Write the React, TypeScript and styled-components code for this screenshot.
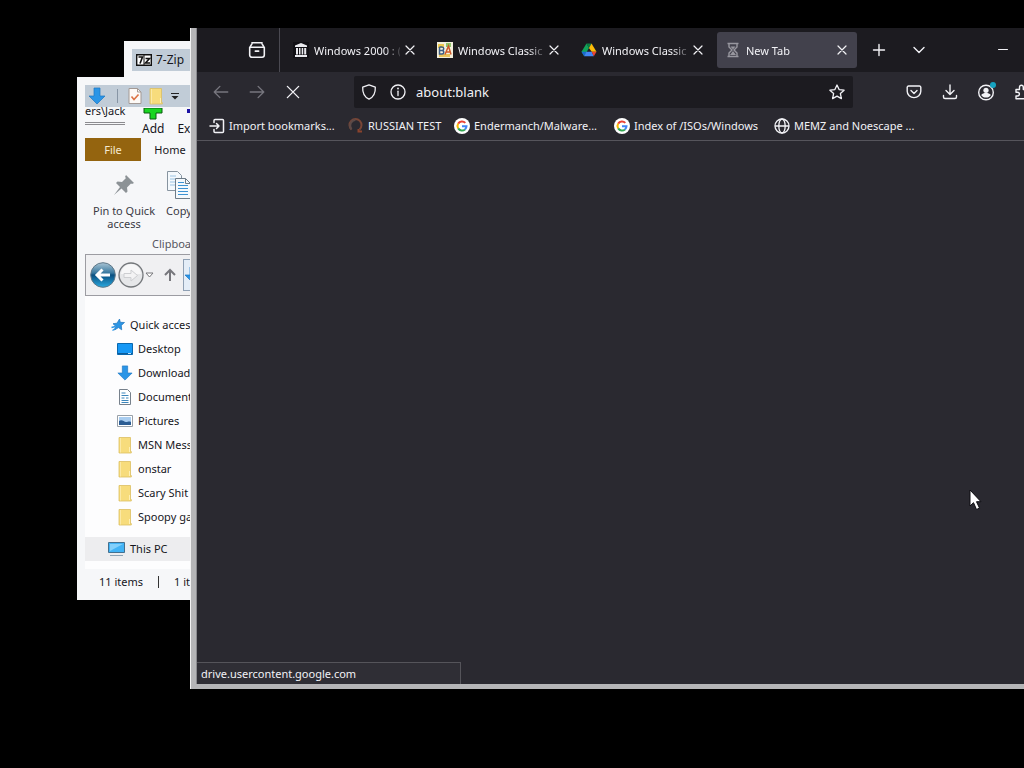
import React from "react";
import styled, { createGlobalStyle, css } from "styled-components";

const GlobalStyle = createGlobalStyle`
  *, *::before, *::after { box-sizing: border-box; }
  html, body, #root { height: 100%; }
  body { margin: 0; background: #000; overflow: hidden; }
  button, input { font: inherit; color: inherit; border: 0; padding: 0; background: none; }
  ul { list-style: none; margin: 0; padding: 0; }
`;

const Desktop = styled.main`
  position: relative;
  height: 100%;
  min-height: 700px;
  overflow: hidden;
  background: #000;
  font-family: "Noto Sans", "Open Sans", sans-serif;
  font-size: 11px;
  line-height: 16px;
  white-space: nowrap;
`;

/* ---------- light windows ---------- */

const LightWindow = styled.section<{ $x: number; $y: number }>`
  position: absolute;
  left: ${(p) => p.$x}px;
  top: ${(p) => p.$y}px;
  width: 260px;
  padding: 8px 8px 5px;
  overflow: hidden;
  background: #f6f7f9;
  color: #16161c;
`;

const TitleBar = styled.header`
  display: flex;
  align-items: center;
  height: 22px;
  gap: 4px;
  padding-left: 4px;
  background: #c1ccd7;
`;

const ZipTitle = styled.h2`
  margin: 0;
  font-size: 12px;
  font-weight: 400;
`;

const ZipBody = styled.div`
  height: 60px;
`;

const QuickBar = styled(TitleBar)`
  gap: 0;
  padding-left: 3px;
`;

const QuickButton = styled.button<{ $gap?: number }>`
  display: flex;
  margin-left: ${(p) => p.$gap ?? 0}px;
`;

const Divider = styled.i`
  width: 1px;
  height: 14px;
  margin-left: 11px;
  background: #8795a5;
`;

const Strip = styled.div`
  display: flex;
  height: 31px;
`;

const PathPiece = styled.div`
  width: 40px;
  height: 18px;
  line-height: 7px;
  border-bottom: 3px double #8c8c90;
`;

const ZipAction = styled.button<{ $gap: number }>`
  display: flex;
  flex-direction: column;
  align-items: center;
  justify-content: flex-end;
  margin-left: ${(p) => p.$gap}px;
  font-size: 12px;
  line-height: 18px;
`;

const RibbonTabs = styled.div`
  display: flex;
  height: 24px;
`;

const RibbonTab = styled.button<{ $file?: boolean }>`
  width: ${(p) => (p.$file ? 56 : 58)}px;
  height: 23px;
  ${(p) =>
    p.$file &&
    css`
      background: #94640f;
      color: #f6ead2;
    `}
`;

const Ribbon = styled.div`
  height: 92px;
  padding: 8px 0 0 7px;
  color: #3a3a44;
`;

const RibbonTools = styled.div`
  display: flex;
  gap: 10px;
  height: 66px;
`;

const RibbonTool = styled.button<{ $w: number }>`
  display: flex;
  flex-direction: column;
  align-items: center;
  width: ${(p) => p.$w}px;
  line-height: 13px;
  gap: 4px;
`;

const ToolPicture = styled.span`
  display: flex;
  align-items: center;
  height: 30px;
`;

const RibbonCaption = styled.div`
  padding-left: 60px;
  color: #55555e;
`;

const AddressRow = styled.nav`
  display: flex;
  align-items: center;
  height: 42px;
  padding-left: 4px;
  border: 1px solid #9c9ca2;
  background: #f0f0f2;
`;

const AddressButton = styled.button<{ $gap?: number }>`
  display: flex;
  margin-left: ${(p) => p.$gap ?? 0}px;
`;

const AddressBox = styled.div`
  display: flex;
  align-items: center;
  flex: 1;
  height: 32px;
  margin-left: 6px;
  border: 1px solid #8fa0b4;
  background: #e4edf7;
`;

const Tree = styled.ul`
  margin: 0 -8px 0 0;
  padding: 17px 0 8px;
  background: #fdfdfe;
`;

const TreeRow = styled.li<{ $depth: number; $hot?: boolean; $gap?: number }>`
  display: flex;
  align-items: center;
  height: 24px;
  margin-top: ${(p) => p.$gap ?? 0}px;
  padding-left: ${(p) => p.$depth}px;
  gap: 5px;
  background: ${(p) => (p.$hot ? "#ededef" : "transparent")};
`;

const StatusRow = styled.footer`
  display: flex;
  align-items: center;
  height: 26px;
  padding-left: 14px;
  gap: 15px;
`;

const StatusDivider = styled.i`
  width: 1px;
  height: 12px;
  background: #333;
`;

/* ---------- browser ---------- */

const Browser = styled.section`
  position: absolute;
  left: 191px;
  right: -36px;
  top: 28px;
  height: 661px;
  display: flex;
  flex-direction: column;
  border: solid #b5b5b7;
  border-width: 0 0 5px 5px;
  box-shadow: inset 1px 0 #8a8a8e, -1px 0 #f2f2f2;
  padding-left: 1px;
  background: #2a2930;
  color: #f2f2f6;
`;

const TabStrip = styled.header`
  display: flex;
  align-items: center;
  height: 44px;
  background: #1c1b20;
`;

const IconButton = styled.button<{ $w?: number; $dim?: boolean }>`
  display: flex;
  flex: none;
  align-items: center;
  justify-content: center;
  width: ${(p) => p.$w ?? 36}px;
  height: 32px;
  color: ${(p) => (p.$dim ? "#77767e" : "#f2f2f6")};
`;

const ViewCell = styled.div`
  display: flex;
  align-items: center;
  height: 44px;
  width: 83px;
  margin-right: 5px;
  padding-left: 42px;
  border-right: 1px solid #4a4951;
`;

const Tabs = styled.div`
  display: flex;
  gap: 4px;
`;

const Tab = styled.div<{ $active?: boolean }>`
  display: flex;
  align-items: center;
  width: 140px;
  height: 36px;
  padding: 0 5px 0 8px;
  border-radius: 3px;
  background: ${(p) => (p.$active ? "#42414c" : "transparent")};
`;

const TabLabel = styled.button`
  display: flex;
  flex: 1;
  min-width: 0;
  align-items: center;
  gap: 5px;
`;

const TabText = styled.span`
  flex: 1;
  overflow: hidden;
  padding-top: 1px;
  text-align: left;
  mask-image: linear-gradient(90deg, #000 82%, transparent 104%);
`;

const Spacer = styled.span`
  flex: 1;
`;

const ToolRow = styled.div`
  display: flex;
  align-items: center;
  height: 40px;
  padding: 0 0 0 6px;
`;

const UrlBar = styled.div`
  display: flex;
  flex: 1;
  align-items: center;
  height: 32px;
  margin: 0 43px 0 43px;
  border-radius: 2px;
  background: #1c1b20;
`;

const UrlInput = styled.input`
  flex: 1;
  min-width: 0;
  margin-left: 4px;
  font-size: 13px;
  outline: none;
`;

const Bookmarks = styled.nav`
  display: flex;
  align-items: center;
  height: 29px;
  padding-left: 12px;
  border-bottom: 1px solid #56555c;
`;

const Bookmark = styled.a<{ $w: number }>`
  display: flex;
  align-items: center;
  width: ${(p) => p.$w}px;
  gap: 4px;
  color: inherit;
  text-decoration: none;
`;

const Page = styled.div`
  display: flex;
  flex: 1;
  align-items: flex-end;
`;

const LinkStatus = styled.output`
  width: 264px;
  height: 22px;
  padding: 3px 4px;
  border: 1px solid #55545a;
  border-width: 1px 1px 0 0;
  background: #2f2e35;
`;

const Pointer = styled.svg`
  position: absolute;
  left: 969px;
  top: 489px;
`;

/* ---------- icons ---------- */

const Line = ({ d, s = 16, w = 1.4, children }: { d?: string; s?: number; w?: number; children?: React.ReactNode }) => (
  <svg width={s} height={s} viewBox="0 0 16 16" fill="none" stroke="currentColor" strokeWidth={w} strokeLinecap="round" strokeLinejoin="round" aria-hidden="true">
    {d && <path d={d} />}
    {children}
  </svg>
);

const DownArrow = ({ s = 18 }: { s?: number }) => (
  <svg width={s} height={s} viewBox="0 0 18 18" aria-hidden="true">
    <path d="M6 1h6v8h5l-8 8-8-8h5z" fill="#2b95e6" stroke="#1b76c2" strokeWidth=".7" />
  </svg>
);

const Folder = () => (
  <svg width="16" height="18" viewBox="0 0 16 18" aria-hidden="true">
    <path d="M2 1.500h11.500v14h.8v1.500H2z" fill="#f7dc7c" stroke="#dcbf62" strokeWidth=".8" />
    <path d="M3.500 2v14.500" stroke="#fbe9a6" />
    <path d="M12.500 11v5" stroke="#fff0b4" />
  </svg>
);

const DesktopIcon = () => (
  <svg width="16" height="16" viewBox="0 0 16 16" aria-hidden="true">
    <path d="M.5 2.500h15v11H.5z" fill="#1698f5" stroke="#0a68ae" />
    <path d="M1 12.500h14" stroke="#0d5c99" />
    <path d="M11 12.500h3" stroke="#b8e1ff" />
  </svg>
);

const DocIcon = () => (
  <svg width="16" height="16" viewBox="0 0 16 16" aria-hidden="true">
    <path d="M2.500.5h8l3 3v12h-11z" fill="#fff" stroke="#77818c" />
    <path d="M4.500 4h4M4.500 6.500h7M4.500 9h3M9 9h2.500M4.500 11.500h7M4.500 13.500h7" stroke="#3d86bb" />
  </svg>
);

const PictureIcon = () => (
  <svg width="16" height="16" viewBox="0 0 16 16" aria-hidden="true">
    <path d="M.5 2.500h15v11H.5z" fill="#fff" stroke="#98a0a8" />
    <path d="M2 4h12v8H2z" fill="#a9cdf0" />
    <path d="M2 8c3-2 5 1 7 1s3-1 5 0v3H2z" fill="#2c5d93" />
  </svg>
);

const StarPin = () => (
  <svg width="14" height="14" viewBox="0 0 14 14" aria-hidden="true">
    <path d="M8.500 1l.8 3.300 4.200.2-3.200 2.900.4 4.400-3.200-2.200L3.500 12l1.300-3.700L2 5.700l4-.5z" fill="#2c95e4" stroke="#1a72bd" strokeWidth=".7" />
    <path d="M.5 9.500l4-1M1.500 12.500l3-2" stroke="#2c95e4" strokeWidth="1.300" />
  </svg>
);

const PcIcon = () => (
  <svg width="17" height="16" viewBox="0 0 17 16" aria-hidden="true">
    <path d="M.5 1.500h16v10H.5z" fill="#42b3f5" stroke="#44708f" />
    <path d="M2 3l13 0-13 7z" fill="#83d0fb" />
    <path d="M2 14.500h13" stroke="#8ea4b5" />
  </svg>
);

const ZipLogo = () => (
  <svg width="16" height="12" viewBox="0 0 16 12" aria-hidden="true">
    <path d="M.7.7h14.600v10.600H.7z" fill="#fff" stroke="#111" strokeWidth="1.400" />
    <path d="M2.500 3h4L4 9.500M9.500 4.500h4l-4 4.500h4.500" stroke="#111" strokeWidth="1.600" fill="none" />
    <path d="M8 1v10" stroke="#111" />
  </svg>
);

const TaskPage = () => (
  <svg width="14" height="16" viewBox="0 0 14 16" aria-hidden="true">
    <path d="M1 .5h8.500l3.500 3.500v11.500H1z" fill="#fdfaf7" stroke="#a49a95" />
    <path d="M9.500.5V4H13" fill="none" stroke="#a49a95" />
    <path d="M3.500 8.500l2.500 3 4.500-5" fill="none" stroke="#dc7446" strokeWidth="1.600" />
  </svg>
);

const PlusGreen = () => (
  <svg width="20" height="12" viewBox="0 0 20 12" aria-hidden="true">
    <path d="M1 0h18v5h-6v6H7V5H1z" fill="#19d621" stroke="#0b5a10" />
  </svg>
);

const ExtractMark = () => (
  <svg width="20" height="12" viewBox="0 0 20 12" aria-hidden="true">
    <path d="M0 1h20v4H0z" fill="#1c12a4" />
  </svg>
);

const Pin = () => (
  <svg width="24" height="24" viewBox="0 0 24 24" aria-hidden="true">
    <path d="M14 2l8 8-2 1-1-.5-4 4 .5 4-1.500 1.500-4.500-4.500L2 22l6-8-4-4L5.500 8.500l4.500.5 4-4-1-1z" fill="#8c9296" />
  </svg>
);

const CopyIcon = () => (
  <svg width="26" height="30" viewBox="0 0 26 30" aria-hidden="true">
    <path d="M1.500 1.500h10l4 4v15h-14z" fill="#f4f9fd" stroke="#8794a0" />
    <path d="M4 6h6M4 9h9M4 12h9M4 15h9" stroke="#9cc4e4" />
    <path d="M9.500 8.500h10l5 5v15h-15z" fill="#f4f9fd" stroke="#6e7c88" />
    <path d="M19.500 8.500v5h5" fill="none" stroke="#6e7c88" />
    <path d="M12 12.500h6M12 15.500h10M12 18.500h10M12 21.500h10M12 24.500h10" stroke="#3d93d3" />
  </svg>
);

const BackOrb = () => (
  <svg width="26" height="26" viewBox="0 0 26 26" aria-hidden="true">
    <defs>
      <linearGradient id="orb" x1="0" y1="0" x2="0" y2="1">
        <stop offset="0" stopColor="#a9c4d4" />
        <stop offset=".42" stopColor="#38789f" />
        <stop offset=".5" stopColor="#0a4f80" />
        <stop offset="1" stopColor="#29a9e0" />
      </linearGradient>
    </defs>
    <circle cx="13" cy="13" r="12.300" fill="url(#orb)" stroke="#5f7787" />
    <path d="M20 13H8M12.500 7.500L7 13l5.500 5.500" fill="none" stroke="#fff" strokeWidth="3" />
  </svg>
);

const ForwardOrb = () => (
  <svg width="26" height="26" viewBox="0 0 26 26" aria-hidden="true">
    <circle cx="13" cy="13" r="12" fill="#e6e7e9" stroke="#74777b" strokeWidth="1.300" />
    <path d="M3 12a10 10 0 0 1 20 0z" fill="#f7f7f8" />
    <path d="M6 11.500h7V8l6.500 5.500L13 19v-3.500H6z" fill="#f3f3f4" stroke="#cdced1" />
  </svg>
);

const CloseIcon = ({ s = 16 }: { s?: number }) => <Line s={s} w={1.2} d="M4 4l8 8M12 4l-8 8" />;

const ViewIcon = () => (
  <Line s={18} w={1.4}>
    <path d="M1.500 5.500h13v7a2 2 0 0 1-2 2h-9a2 2 0 0 1-2-2zM2 5l1.500-2.500M14 5l-1.500-2.500M3.500 1.500h9M6.500 9h3" />
  </Line>
);

const MuseumIcon = () => (
  <svg width="16" height="16" viewBox="0 0 16 16" aria-hidden="true">
    <path d="M0 0h16v16H0z" fill="#111015" />
    <path d="M8 1l6 2.500V5H2V3.500zM2 13h12v2H2zM3 6h2v6.500H3zM6 6h1.500v6.500H6zM8.700 6h1.500v6.500H8.700zM11.200 6h2v6.500h-2z" fill="#e9e9ee" />
  </svg>
);

const BaIcon = () => (
  <svg width="16" height="16" viewBox="0 0 16 16" aria-hidden="true">
    <path d="M0 0h16v16H0z" fill="#f3f0dd" />
    <path d="M1 2h6v4H1z" fill="#efc94e" />
    <path d="M9 1h5v4H9z" fill="#8fc26b" />
    <path d="M2 12h11v3H2z" fill="#e8c25a" />
    <path d="M2.500 5v7h2.500a1.700 1.700 0 0 0 0-3.500H3M3 8.500h2A1.700 1.700 0 0 0 5 5H2.500" fill="none" stroke="#3e5e86" strokeWidth="1.500" />
    <path d="M8 12.500L11.500 4l2.500 8.500M9 10h4" fill="none" stroke="#cf5b2b" strokeWidth="1.500" />
  </svg>
);

const DriveIcon = () => (
  <svg width="16" height="16" viewBox="0 0 16 16" aria-hidden="true">
    <path d="M5.500 1.500L8 6 3.200 14.200.5 9.700z" fill="#12a35a" />
    <path d="M5.500 1.500h5L8 6z" fill="#0c8043" />
    <path d="M10.500 1.500l5 8.200h-4.800L8 6z" fill="#fbbc08" />
    <path d="M.5 9.700h4.800l-2.100 4.500z" fill="#1967d2" />
    <path d="M5.300 9.700h5.400l2.100 4.500H3.200z" fill="#4285f4" />
    <path d="M10.700 9.700h4.800l-2.700 4.500z" fill="#ea4335" />
  </svg>
);

const Hourglass = () => (
  <svg width="16" height="16" viewBox="0 0 16 16" fill="none" stroke="#98979f" aria-hidden="true">
    <path d="M2.500 1.500h11M2.500 14.500h11" strokeWidth="1.700" />
    <path d="M4 2v3l3 3-3 3v3M12 2v3L9 8l3 3v3" strokeWidth="1.400" />
    <path d="M5.500 4.500h5L8 7.500zM8 9l3 4H5z" fill="#98979f" stroke="none" />
  </svg>
);

const GoogleIcon = () => (
  <svg width="16" height="16" viewBox="0 0 16 16" fill="none" strokeWidth="2" aria-hidden="true">
    <circle cx="8" cy="8" r="8" fill="#fff" />
    <path d="M11.300 4.900A4.500 4.500 0 0 0 4.200 5.600" stroke="#ea4335" />
    <path d="M4.200 5.600A4.500 4.500 0 0 0 4.200 10.400" stroke="#fbbc05" />
    <path d="M4.200 10.400A4.500 4.500 0 0 0 11 11.400" stroke="#34a853" />
    <path d="M8 8.200h4.500A4.500 4.500 0 0 1 11 11.400" stroke="#4285f4" />
  </svg>
);

const HorseShoe = () => (
  <svg width="16" height="16" viewBox="0 0 16 16" fill="none" strokeWidth="2" aria-hidden="true">
    <path d="M3.500 11.500A6 6 0 1 1 11.500 11.500" stroke="#7a4636" />
    <path d="M3.500 11.500A6 6 0 0 1 7.500 1.800" stroke="#5c4a47" />
    <path d="M10.500 11v2.500h3.500" stroke="#8a432c" />
  </svg>
);

const ImportIcon = () => (
  <Line s={16} w={1.5} d="M5 4.500v-2a1 1 0 0 1 1-1h7.500a1 1 0 0 1 1 1v11a1 1 0 0 1-1 1H6a1 1 0 0 1-1-1v-2M1 8h9M7.500 5.500L10 8l-2.500 2.500" />
);

const Globe = () => (
  <Line s={16} w={1.3}>
    <circle cx="8" cy="8" r="7" />
    <ellipse cx="8" cy="8" rx="3.200" ry="7" />
    <path d="M1.500 8h13" />
  </Line>
);

const tabs = [
  { title: "Windows 2000 : (", icon: <MuseumIcon /> },
  { title: "Windows Classic", icon: <BaIcon /> },
  { title: "Windows Classic", icon: <DriveIcon /> },
  { title: "New Tab", icon: <Hourglass />, active: true },
];

const bookmarks = [
  { title: "Import bookmarks...", icon: <ImportIcon />, w: 139 },
  { title: "RUSSIAN TEST", icon: <HorseShoe />, w: 106 },
  { title: "Endermanch/Malware...", icon: <GoogleIcon />, w: 160 },
  { title: "Index of /ISOs/Windows", icon: <GoogleIcon />, w: 160 },
  { title: "MEMZ and Noescape ...", icon: <Globe />, w: 160 },
];

const places = [
  { title: "Desktop", icon: <DesktopIcon /> },
  { title: "Downloads", icon: <DownArrow s={16} /> },
  { title: "Documents", icon: <DocIcon /> },
  { title: "Pictures", icon: <PictureIcon /> },
  { title: "MSN Messenger", icon: <Folder /> },
  { title: "onstar", icon: <Folder /> },
  { title: "Scary Shit", icon: <Folder /> },
  { title: "Spoopy games", icon: <Folder /> },
];

export default function App() {
  return (
    <Desktop>
      <GlobalStyle />

      <LightWindow $x={124} $y={41}>
        <TitleBar>
          <ZipLogo />
          <ZipTitle>7-Zip</ZipTitle>
        </TitleBar>
        <ZipBody />
      </LightWindow>

      <LightWindow $x={77} $y={77}>
        <QuickBar>
          <QuickButton aria-label="Downloads"><DownArrow /></QuickButton>
          <Divider />
          <QuickButton $gap={10} aria-label="Properties"><TaskPage /></QuickButton>
          <QuickButton $gap={6} aria-label="New folder"><Folder /></QuickButton>
          <QuickButton $gap={6} aria-label="Customize toolbar">
            <svg width="10" height="8" viewBox="0 0 10 8"><path d="M1 1.500h8" stroke="#222" /><path d="M1.500 4h7L5 7.500z" fill="#222" /></svg>
          </QuickButton>
          <Divider />
        </QuickBar>
        <Strip>
          <PathPiece>ers\Jack</PathPiece>
          <ZipAction $gap={17}><PlusGreen />Add</ZipAction>
          <ZipAction $gap={13}><ExtractMark />Extract</ZipAction>
        </Strip>
        <RibbonTabs>
          <RibbonTab $file>File</RibbonTab>
          <RibbonTab>Home</RibbonTab>
        </RibbonTabs>
        <Ribbon>
          <RibbonTools>
            <RibbonTool $w={64}>
              <ToolPicture><Pin /></ToolPicture>
              <span>Pin to Quick<br />access</span>
            </RibbonTool>
            <RibbonTool $w={26}>
              <ToolPicture><CopyIcon /></ToolPicture>
              <span>Copy</span>
            </RibbonTool>
          </RibbonTools>
          <RibbonCaption>Clipboard</RibbonCaption>
        </Ribbon>
        <AddressRow>
          <AddressButton aria-label="Back"><BackOrb /></AddressButton>
          <AddressButton $gap={2} aria-label="Forward"><ForwardOrb /></AddressButton>
          <AddressButton $gap={1} aria-label="Recent locations">
            <svg width="9" height="6" viewBox="0 0 9 6"><path d="M1 1h7L4.500 5z" fill="#fff" stroke="#77777b" /></svg>
          </AddressButton>
          <AddressButton $gap={9} aria-label="Up">
            <svg width="14" height="14" viewBox="0 0 14 14" fill="none" stroke="#77777c" strokeWidth="2"><path d="M7 13V2M2 7l5-5 5 5" /></svg>
          </AddressButton>
          <AddressBox><DownArrow /></AddressBox>
        </AddressRow>
        <Tree>
          <TreeRow $depth={26}><StarPin />Quick access</TreeRow>
          {places.map((p) => (
            <TreeRow key={p.title} $depth={32}>{p.icon}{p.title}</TreeRow>
          ))}
          <TreeRow $depth={23} $hot $gap={8}><PcIcon />This PC</TreeRow>
        </Tree>
        <StatusRow>
          <span>11 items</span>
          <StatusDivider />
          <span>1 item selected</span>
        </StatusRow>
      </LightWindow>

      <Browser>
        <TabStrip>
          <ViewCell>
            <IconButton aria-label="View recent browsing"><ViewIcon /></IconButton>
          </ViewCell>
          <Tabs>
            {tabs.map((t, i) => (
              <Tab key={i} $active={t.active}>
                <TabLabel>{t.icon}<TabText>{t.title}</TabText></TabLabel>
                <IconButton $w={20} aria-label="Close tab"><CloseIcon /></IconButton>
              </Tab>
            ))}
          </Tabs>
          <IconButton $w={44} aria-label="New tab"><Line d="M8 2.500v11M2.500 8h11" /></IconButton>
          <IconButton aria-label="List all tabs"><Line d="M3 5.500l5 5 5-5" /></IconButton>
          <Spacer />
          <IconButton $w={46} aria-label="Minimize"><Line w={1} d="M3.500 7.500h9" /></IconButton>
          <IconButton $w={34} aria-label="Maximize"><Line w={1} d="M3.500 3.500h9v9h-9z" /></IconButton>
        </TabStrip>
        <ToolRow>
          <IconButton $dim aria-label="Back"><Line s={18} w={1.2} d="M14 8H2M7 3L2 8l5 5" /></IconButton>
          <IconButton $dim aria-label="Forward"><Line s={18} w={1.2} d="M2 8h12M9 3l5 5-5 5" /></IconButton>
          <IconButton aria-label="Stop"><Line s={18} w={1.2} d="M3 3l10 10M13 3L3 13" /></IconButton>
          <UrlBar>
            <IconButton $w={30} aria-label="Tracking protection">
              <Line w={1.3} d="M8 .8l6.300 2.300c.3 5.500-1.600 9.900-6.300 12.100C3.300 13 1.400 8.600 1.700 3.100z" />
            </IconButton>
            <IconButton $w={28} aria-label="Site information">
              <Line w={1.3}><circle cx="8" cy="8" r="7" /><path d="M8 7.200v4.300" /><path d="M8 4.500v.1" strokeWidth="1.800" /></Line>
            </IconButton>
            <UrlInput aria-label="Address" defaultValue="about:blank" />
            <IconButton $w={32} aria-label="Bookmark this page">
              <Line w={1.3} d="M8 1l2.100 4.600 5 .6-3.700 3.400 1 5L8 12.100l-4.400 2.500 1-5L.9 6.200l5-.6z" />
            </IconButton>
          </UrlBar>
          <IconButton aria-label="Save to Pocket">
            <Line w={1.4} d="M2.500 2h11a1.300 1.300 0 0 1 1.300 1.300v4a6.800 6.300 0 0 1-13.600 0v-4A1.300 1.300 0 0 1 2.500 2zM5 6.500l3 3 3-3" />
          </IconButton>
          <IconButton aria-label="Downloads">
            <Line w={1.4} d="M8 1v9.500M4 6.500l4 4 4-4M1.500 11.500v1.500a1.500 1.500 0 0 0 1.500 1.500h10a1.500 1.500 0 0 0 1.500-1.500v-1.500" />
          </IconButton>
          <IconButton aria-label="Account">
            <svg width="20" height="20" viewBox="0 0 20 20" fill="none" aria-hidden="true">
              <circle cx="10" cy="10.500" r="7.300" stroke="#f2f2f6" strokeWidth="1.400" />
              <circle cx="10" cy="8.300" r="2.600" fill="#f2f2f6" />
              <path d="M5.200 13c2-2.600 7.600-2.600 9.600 0-1.500 3.400-8.100 3.400-9.600 0z" fill="#f2f2f6" />
              <circle cx="17" cy="3" r="3" fill="#16a3c0" />
            </svg>
          </IconButton>
          <IconButton aria-label="Extensions">
            <Line w={1.4} d="M2 5.500h3.500V3.200a1.900 1.900 0 0 1 3.800 0v2.300H13v9.300H2V12h1.500a1.900 1.900 0 0 0 0-3.800H2z" />
          </IconButton>
          <IconButton $w={20} aria-label="Menu"><Line d="M2 4h12M2 8h12M2 12h12" /></IconButton>
        </ToolRow>
        <Bookmarks>
          {bookmarks.map((b) => (
            <Bookmark key={b.title} href="#" $w={b.w}>{b.icon}{b.title}</Bookmark>
          ))}
        </Bookmarks>
        <Page>
          <LinkStatus>drive.usercontent.google.com</LinkStatus>
        </Page>
      </Browser>

      <Pointer width="14" height="22" viewBox="0 0 14 22" aria-hidden="true">
        <path d="M1 1v16l3.500-3.300L7.500 20.500l3-1.400-3-6.400H12z" fill="#fff" stroke="#0c0c10" />
      </Pointer>
    </Desktop>
  );
}
